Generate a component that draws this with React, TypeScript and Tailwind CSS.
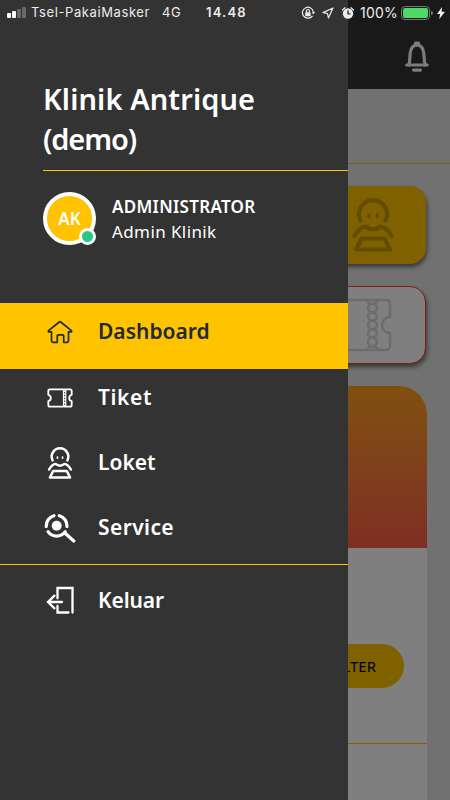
import { useState } from "react";
import type { ReactNode } from "react";

type IconProps = { className?: string };

function HomeIcon({ className }: IconProps) {
  return (
    <svg viewBox="0 0 26 24" className={className} fill="none" stroke="currentColor" strokeWidth="1.7" strokeLinejoin="round" strokeLinecap="round" aria-hidden="true">
      <path d="M4.5 11.8H1.6q-.7-.3 0-1.1L12.3 2q.7-.6 1.4 0l10.7 8.7q.7.8 0 1.1h-2.9v9q0 1.5-1.5 1.5h-3.3v-6.500q0-1-1-1h-4.400q-1 0-1 1v6.500H6q-1.500 0-1.500-1.500z" />
    </svg>
  );
}

function TicketIcon({ className }: IconProps) {
  return (
    <svg viewBox="0 0 26 20" className={className} fill="none" stroke="currentColor" strokeWidth="1.8" strokeLinejoin="round" aria-hidden="true">
      <path d="M3 1.300h20q1.700 0 1.700 1.700v3.800a3.300 3.300 0 0 0 0 6.400V17q0 1.700-1.700 1.700H3q-1.700 0-1.700-1.700v-3.800a3.300 3.300 0 0 0 0-6.400V3q0-1.700 1.700-1.700z" />
      <path d="M16.500 1.500v17M18.700 1.500v17" strokeWidth="1.200" />
      <path d="M17.600 2.500v16" strokeWidth="3" strokeDasharray="1.400 1.500" />
    </svg>
  );
}

function CounterIcon({ className }: IconProps) {
  return (
    <svg viewBox="0 0 42 54" className={className} fill="none" stroke="currentColor" strokeWidth="4.2" strokeLinejoin="round" strokeLinecap="round" aria-hidden="true">
      <path d="M8.500 22.500A14 14 0 1 1 33.500 22.500" />
      <path d="M2.500 38c3.500-6 7-9 11-9.500 4.500 3.600 10.500 3.600 15 0 4 .5 7.500 3.500 11 9.500" />
      <path d="M9.500 40.500h23l5.500 11H4z" />
      <path d="M16.700 17v2M25.300 17v2" strokeWidth="2.800" />
    </svg>
  );
}

function ServiceIcon({ className }: IconProps) {
  return (
    <svg viewBox="0 0 32 30" className={className} fill="none" stroke="currentColor" strokeWidth="3.2" strokeLinecap="round" aria-hidden="true">
      <circle cx="12.700" cy="12.800" r="5" fill="currentColor" stroke="none" />
      <path d="M2.200 13.500A10.500 10.500 0 0 1 10 2.700M15.300 2.700A10.500 10.500 0 0 1 23 13.500M4 18.700A10.500 10.500 0 0 0 21.200 18.700" />
      <path d="M20.800 20l9 8" />
    </svg>
  );
}

function LogoutIcon({ className }: IconProps) {
  return (
    <svg viewBox="0 0 28 28" className={className} fill="none" stroke="currentColor" strokeWidth="2.300" strokeLinecap="round" aria-hidden="true">
      <path d="M11.500 12.300V2h15v24.500" />
      <path d="M11.500 20v6.500h11" />
      <path d="M16 16H2M8.500 9.700L2 16l6.500 6.300" />
    </svg>
  );
}

function LargeTicketIcon() {
  return (
    <svg viewBox="0 0 80 54" className="h-[54px] w-20 text-[#d8d8d8]" fill="none" stroke="currentColor" strokeWidth="2.500" aria-hidden="true">
      <path d="M6 2h68q4 0 4 4v13a8 8 0 0 0 0 16v13q0 4-4 4H6q-4 0-4-4V35a8 8 0 0 0 0-16V6q0-4 4-4z" />
      {[10, 18.5, 27, 35.5, 44].map((y) => (
        <circle key={y} cx="60.500" cy={y} r="4.300" />
      ))}
      <path d="M55.500 2a5 4 0 0 0 10 0M55.500 52a5 4 0 0 1 10 0" />
    </svg>
  );
}

const NAV_LINKS: { name: string; icon: ReactNode; tracking: string }[] = [
  { name: "Dashboard", icon: <HomeIcon className="h-6 w-[26px]" />, tracking: "tracking-[0px]" },
  { name: "Tiket", icon: <TicketIcon className="h-5 w-[26px]" />, tracking: "tracking-[0.6px]" },
  { name: "Loket", icon: <CounterIcon className="h-8 w-[26px]" />, tracking: "tracking-[0px]" },
  { name: "Service", icon: <ServiceIcon className="h-[30px] w-8" />, tracking: "tracking-[0.4px]" },
];

function StatusBar() {
  return (
    <div className="absolute inset-x-0 top-0 z-30 flex h-[25px] items-center pl-[7px] font-['Inter','Liberation_Sans',sans-serif] text-[13px] text-[#ececec]">
      <div className="flex w-5 items-end gap-px" aria-hidden="true">
        <span className="h-[5px] w-[4px] rounded-[1px] bg-white" />
        <span className="h-[7px] w-[4px] rounded-[1px] bg-white" />
        <span className="h-[9px] w-[4px] rounded-[1px] bg-[#686868]" />
        <span className="h-[11px] w-[4px] rounded-[1px] bg-[#686868]" />
      </div>
      <span className="ml-[4px] w-[131px] whitespace-nowrap tracking-[0.6px]">Tsel-PakaiMasker</span>
      <span className="w-11 tracking-[0.7px]">4G</span>
      <span className="w-[95px] font-semibold tracking-[1.2px]">14.48</span>
      <svg viewBox="0 0 14 14" className="size-[14px]" fill="none" stroke="currentColor" strokeWidth="1.200" aria-hidden="true">
        <path d="M11.500 9.800A5.500 5.500 0 1 1 12.400 6" />
        <path d="M10.800 6h3.200l-1.600 2.400z" fill="currentColor" stroke="none" />
        <rect x="4.200" y="6.300" width="5.400" height="4" rx=".5" fill="currentColor" stroke="none" />
        <path d="M5.400 6.500V5a1.500 1.500 0 0 1 3 0v1.500" />
      </svg>
      <svg viewBox="0 0 12 12" className="ml-[7px] size-3" fill="none" stroke="currentColor" strokeWidth="1.200" strokeLinejoin="round" aria-hidden="true">
        <path d="M11 1L1 5.600l4.500.9.900 4.500z" />
      </svg>
      <svg viewBox="0 0 14 14" className="ml-[7px] size-[14px]" fill="currentColor" aria-hidden="true">
        <circle cx="7" cy="7.500" r="5.200" />
        <path d="M1.500 4L4 1.700M12.500 4L10 1.700" stroke="currentColor" strokeWidth="1.200" strokeLinecap="round" />
        <path d="M7 4.300v3.500h2.500" fill="none" stroke="#292929" strokeWidth="1.300" />
      </svg>
      <span className="ml-[5px] w-[41px] whitespace-nowrap text-[14px] tracking-[0.2px]">100%</span>
      <span className="h-[14px] w-[29px] rounded-[4px] border border-[#77747a] p-px">
        <span className="block h-full rounded-[2px] bg-[#4cd964]" />
      </span>
      <span className="ml-px h-1 w-[1.5px] rounded-r bg-[#77747a]" />
      <svg viewBox="0 0 8 12" className="ml-[4px] h-3 w-2" fill="currentColor" aria-hidden="true">
        <path d="M5 0L0 7h3L2.300 12 8 4.700H4.700z" />
      </svg>
    </div>
  );
}

function DashboardPage() {
  return (
    <div className="flex h-full flex-col bg-[#e2e2e2]">
      <header className="flex h-[89px] shrink-0 items-end justify-end bg-[#333] pr-5 pb-[17px]">
        <svg viewBox="0 0 26 32" className="h-8 w-[26px] text-[#f8f8f8]" fill="none" stroke="currentColor" strokeWidth="3.200" strokeLinecap="round" strokeLinejoin="round" aria-label="Notifikasi">
          <path d="M4.800 25c1.300-4 .8-8 1.500-12.500C7 8 9 5.200 13 5.200s6 2.800 6.700 7.300c.7 4.500.2 8.500 1.500 12.500" />
          <path d="M2.700 25h20.600M9.500 30.100h7M11.500 3h3" />
        </svg>
      </header>
      <div className="h-[75px] shrink-0 border-b border-[#ffc300]" />
      <main className="flex grow flex-col px-6 pt-[22px]">
        <div className="flex h-[78px] shrink-0 items-center justify-end rounded-[16px] bg-[#ffc300] pr-8 text-[#c79800] shadow-[1px_3px_4px_rgba(0,0,0,0.5)]">
          <CounterIcon className="h-[54px] w-[42px]" />
        </div>
        <div className="mt-[22px] flex h-[78px] shrink-0 items-center justify-end rounded-[16px] border border-[#ff3b20] bg-white pr-[33px] shadow-[1px_3px_4px_rgba(0,0,0,0.5)]">
          <LargeTicketIcon />
        </div>
        <section className="-mr-px mt-[22px] flex grow flex-col rounded-t-[28px] bg-white">
          <div className="h-[162px] shrink-0 rounded-t-[28px] bg-linear-to-b from-[#ffa018] to-[#ff5d45]" />
          <div className="flex justify-end pt-24 pr-[23px]">
            <button type="button" className="h-11 w-32 rounded-full bg-[#ffc300] pr-[28px] text-right text-[15px] text-black">
              FILTER
            </button>
          </div>
          <div className="mt-[55px] border-t border-[#ffc300]" />
        </section>
      </main>
    </div>
  );
}

export default function App() {
  const [active, setActive] = useState("Dashboard");

  return (
    <div className="relative h-[800px] w-[450px] overflow-hidden font-['Noto_Sans',sans-serif]">
      <DashboardPage />
      <div className="absolute inset-0 z-10 bg-black/50" />
      <StatusBar />

      {/* Drawer */}
      <aside className="absolute inset-y-0 left-0 z-20 flex w-[348px] flex-col bg-[#333] text-white">
        <div className="pt-[79px] pl-[43px]">
          <h1 className="border-b border-[#ffc300] pb-[11px] text-[29px] leading-10 font-semibold">
            <span className="block tracking-[0.1px]">Klinik Antrique</span>
            <span className="block tracking-[-1.1px]">(demo)</span>
          </h1>
          <div className="mt-[21px] flex items-center">
            <div className="relative flex size-[53px] items-center justify-center rounded-full border-4 border-white bg-[#ffc300] text-[17px] font-semibold">
              AK
              <span className="absolute -right-1 -bottom-1 size-[17px] rounded-full border-[3px] border-white bg-[#27c882]" />
            </div>
            <div className="ml-4">
              <p className="text-[17px] leading-[25px] font-semibold tracking-[0.3px]">ADMINISTRATOR</p>
              <p className="text-[17px] leading-[25px] tracking-[0.4px]">Admin Klinik</p>
            </div>
          </div>
        </div>

        <nav className="mt-[58px]">
          {NAV_LINKS.map(({ name, icon, tracking }) => (
            <button
              key={name}
              type="button"
              onClick={() => setActive(name)}
              className={`flex w-full items-center pl-[43px] text-[21px] font-semibold ${tracking} ${
                active === name ? "h-[66px] bg-[#ffc300] pb-2 text-[#222b32]" : "h-[65px] pb-[7px]"
              }`}
            >
              <span className="flex w-[55px] items-center pb-px">
                <span className="flex w-[33px] justify-center">{icon}</span>
              </span>
              {name}
            </button>
          ))}
        </nav>
        <button type="button" className="flex h-[73px] items-center border-t border-[#ffc300] pl-[43px] text-[21px] font-semibold tracking-[-0.1px]">
          <span className="flex w-[55px] items-center pb-0.5 pl-[3px]">
            <LogoutIcon className="size-7" />
          </span>
          Keluar
        </button>
      </aside>
    </div>
  );
}
